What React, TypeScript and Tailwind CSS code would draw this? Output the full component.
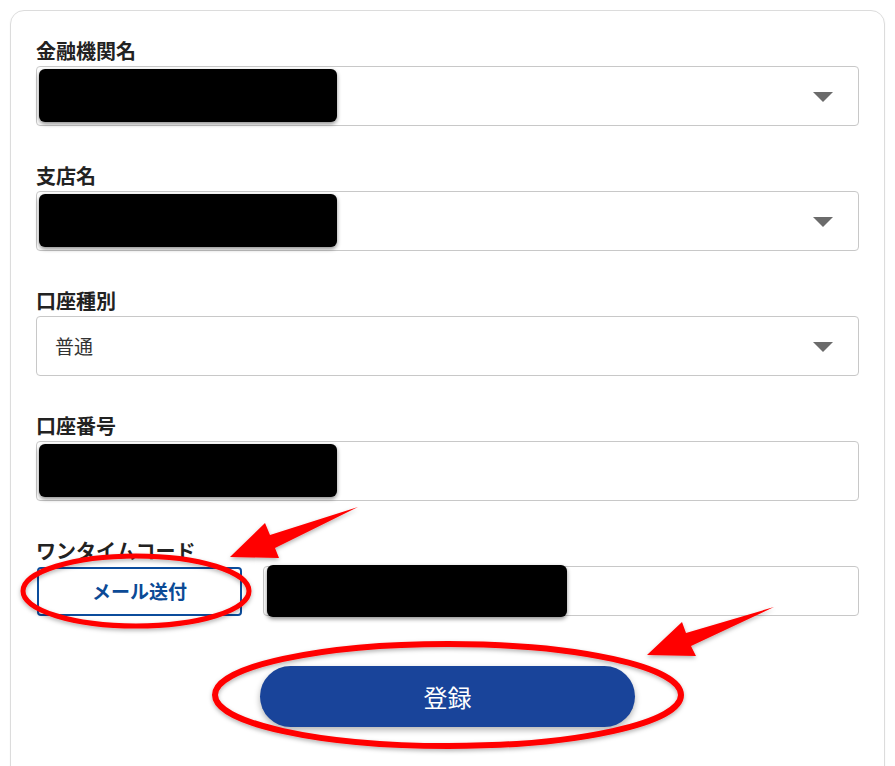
import React from "react";

type Field = {
    label: string;
    kind: "select" | "input";
    value?: string;
    redacted?: boolean;
};

const FIELDS: Field[] = [
    {label: "金融機関名", kind: "select", redacted: true},
    {label: "支店名", kind: "select", redacted: true},
    {label: "口座種別", kind: "select", value: "普通"},
    {label: "口座番号", kind: "input", redacted: true},
];

function Redaction({className}: {className: string}) {
    return (
        <div
            className={`absolute bg-black rounded-[6px] shadow-[0_2px_4px_rgba(0,0,0,0.45)] ${className}`}
        />
    );
}

function FormField({label, kind, value, redacted}: Field) {
    return (
        <div className="flex flex-col">
            <label className="text-[20px] leading-[24px] font-bold text-[#222]">
                {label}
            </label>
            <div className="relative mt-[3px] h-[60px] w-full border border-[#c8c8c8] rounded-[4px] bg-white flex items-center">
                {value ? (
                    <span className="pl-[18px] text-[19px] text-[#333]">
                        {value}
                    </span>
                ) : null}
                {redacted ? (
                    <Redaction className="left-[2px] top-[2px] w-[298px] h-[53px]" />
                ) : null}
                {kind === "select" ? (
                    <svg
                        className="absolute right-[25px] top-[25px]"
                        width="20"
                        height="10"
                        viewBox="0 0 20 10"
                    >
                        <path d="M0 0 H20 L10 10 Z" fill="#6b6b6b" />
                    </svg>
                ) : null}
            </div>
        </div>
    );
}

function Arrow({points}: {points: string}) {
    return <polygon points={points} fill="#ff0000" filter="url(#shadow)" />;
}

export default function App() {
    return (
        <div className="relative w-[895px] h-[766px] overflow-hidden bg-white font-['Noto_Sans_CJK_JP','Noto_Sans',sans-serif]">
            <div className="ml-[10px] mt-[10px] w-[875px] border border-[#dcdcdc] rounded-[14px] px-[25px] pt-[28px] pb-[80px] shadow-[0_1px_2px_rgba(0,0,0,0.06)]">
                <div className="flex flex-col gap-[38px]">
                    {FIELDS.map((f) => (
                        <FormField key={f.label} {...f} />
                    ))}
                </div>

                <div className="mt-[38px] flex flex-col">
                    <label className="text-[20px] leading-[24px] font-bold text-[#222]">
                        ワンタイムコード
                    </label>
                    <div className="mt-[3px] flex items-center gap-[21px]">
                        <button className="ml-[1px] h-[49px] w-[205px] shrink-0 border-2 border-[#0b4c9c] rounded-[4px] bg-white text-[19px] font-bold text-[#0b4a96]">
                            メール送付
                        </button>
                        <div className="relative h-[50px] flex-1 border border-[#c8c8c8] rounded-[4px] bg-white">
                            <Redaction className="left-[3px] top-[-2px] w-[300px] h-[52px]" />
                        </div>
                    </div>
                </div>

                <div className="mt-[50px] flex justify-center">
                    <button className="h-[61px] w-[375px] rounded-full bg-[#19449a] text-white text-[24px] font-normal shadow-[0_3px_6px_rgba(0,0,0,0.3)]">
                        登録
                    </button>
                </div>
            </div>

            {/* red annotations */}
            <svg
                className="absolute left-0 top-0 pointer-events-none"
                width="895"
                height="766"
                viewBox="0 0 895 766"
            >
                <defs>
                    <filter id="shadow" x="-10%" y="-10%" width="120%" height="130%">
                        <feDropShadow dx="0" dy="2" stdDeviation="2" floodColor="#000" floodOpacity="0.3" />
                    </filter>
                </defs>
                <ellipse
                    cx="136"
                    cy="591"
                    rx="113"
                    ry="35"
                    fill="none"
                    stroke="#ff0000"
                    strokeWidth="5"
                    filter="url(#shadow)"
                />
                <ellipse
                    cx="448"
                    cy="695"
                    rx="233"
                    ry="51"
                    fill="none"
                    stroke="#ff0000"
                    strokeWidth="6"
                    filter="url(#shadow)"
                />
                <Arrow points="230,557 265,523 270,535 358,507 275,548 279,558" />
                <Arrow points="647,655 682,622 686,633 774,607 691,646 696,656" />
            </svg>
        </div>
    );
}
